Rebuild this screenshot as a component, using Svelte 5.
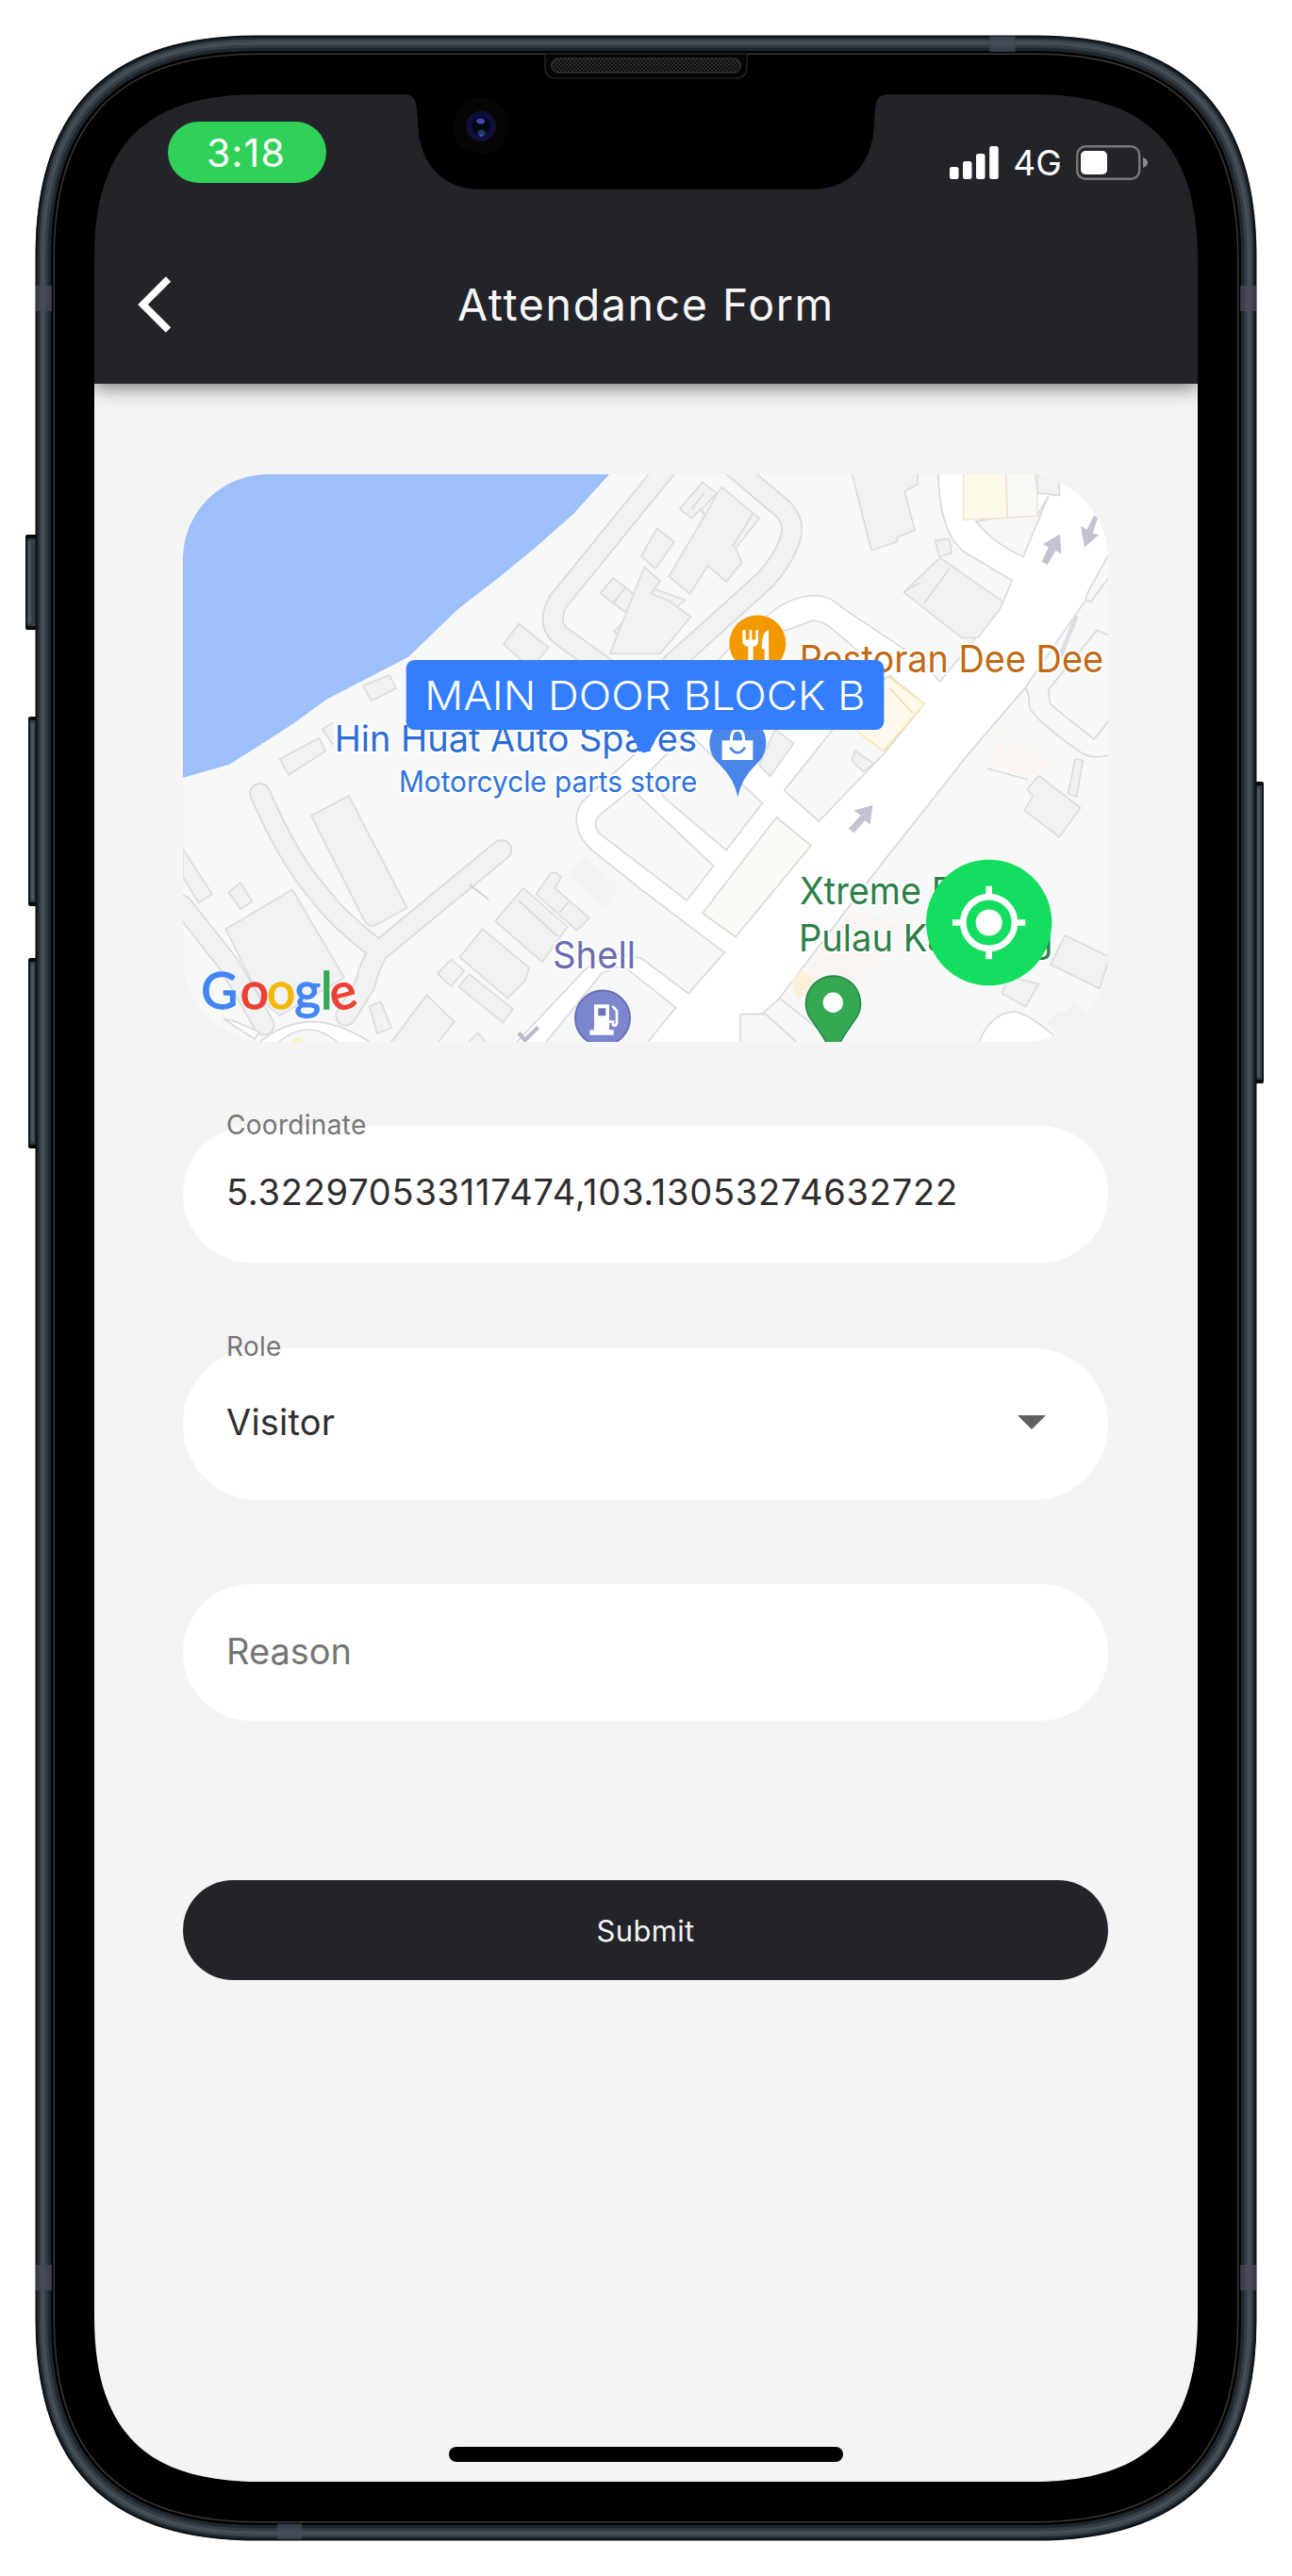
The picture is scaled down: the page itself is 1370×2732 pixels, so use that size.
<script>
  // Continuous-corner rectangle, inset from the outer edge of the phone body.
  function body(inset) {
    const x0 = 38 + inset, y0 = 38 + inset, x1 = 1332 - inset, y1 = 2694 - inset;
    const l = 234 - 0.95 * inset, c = 77 - 0.37 * inset;
    return `M${x0} ${y0 + l}C${x0} ${y0 + c} ${x0 + c} ${y0} ${x0 + l} ${y0}` +
      `L${x1 - l} ${y0}C${x1 - c} ${y0} ${x1} ${y0 + c} ${x1} ${y0 + l}` +
      `L${x1} ${y1 - l}C${x1} ${y1 - c} ${x1 - c} ${y1} ${x1 - l} ${y1}` +
      `L${x0 + l} ${y1}C${x0 + c} ${y1} ${x0} ${y1 - c} ${x0} ${y1 - l}Z`;
  }

  const screenHole = body(62);
  const rings = [
    { inset: 0.5, color: '#0a0f13', width: 2 },
    { inset: 2.5, color: '#1f272d', width: 2.5 },
    { inset: 5, color: '#3a444b', width: 3 },
    { inset: 8, color: '#474f56', width: 4 },
    { inset: 11.5, color: '#343d44', width: 4 },
    { inset: 14.5, color: '#20272c', width: 4 },
    { inset: 17, color: '#020303', width: 2 },
    { inset: 19.3, color: '#3d3b3b', width: 1.4 }
  ];

  const bands = [
    { x: 38, y: 303, w: 17, h: 27 },
    { x: 1315, y: 303, w: 17, h: 27 },
    { x: 38, y: 2402, w: 17, h: 27 },
    { x: 1315, y: 2402, w: 17, h: 27 },
    { x: 1049.5, y: 38.5, w: 27, h: 16.5 },
    { x: 294, y: 2676.5, w: 26, h: 16.5 }
  ];

  const keys = [
    { x: 27, y: 567, w: 13, h: 101 },
    { x: 30, y: 760, w: 10, h: 201 },
    { x: 30, y: 1016, w: 10, h: 202 },
    { x: 1330, y: 829, w: 10, h: 320 }
  ];

  const logo = [
    { ch: 'G', x: 100, turn: 0, fill: '#4285f4' },
    { ch: 'o', x: 224, turn: 0, fill: '#ea4335' },
    { ch: 'o', x: 309, turn: 0, fill: '#f2b90a' },
    { ch: 'g', x: 397, turn: 0, fill: '#4285f4' },
    { ch: 'l', x: 480, turn: 0, fill: '#34a853' },
    { ch: 'e', x: 510, turn: -14, fill: '#ea4335' }
  ];

  let coordinate = '5.322970533117474,103.13053274632722';
  let role = 'Visitor';
</script>

<main class="stage">
  <div class="screen">
    <header class="top">
      <div class="status">
        <span class="clock">3:18</span>
        <div class="signal">
          <svg class="bars" viewBox="0 0 52 35">
            <rect x="0" y="22" width="9.5" height="13" rx="2.5" />
            <rect x="14" y="16" width="9.5" height="19" rx="2.5" />
            <rect x="28" y="8" width="9.5" height="27" rx="2.5" />
            <rect x="42.2" y="0" width="9.5" height="35" rx="2.5" />
          </svg>
          <span class="net">4G</span>
          <svg class="battery" viewBox="0 0 76 37">
            <rect x="1.2" y="1.2" width="66" height="34.6" rx="9" fill="none" stroke="#77787c" stroke-width="2.4" />
            <rect x="5" y="6" width="28" height="25" rx="5" fill="#fff" />
            <path d="M71 13Q76 15 76 18.500T71 24Z" fill="#8a8b8e" />
          </svg>
        </div>
      </div>
      <div class="bar">
        <svg class="back" viewBox="0 0 36 60">
          <path d="M32.500 3L5.500 30L32.500 57" fill="none" stroke="#fff" stroke-width="7.5" />
        </svg>
        <h1>Attendance Form</h1>
        <span class="spacer"></span>
      </div>
    </header>

    <section class="form">
      <div class="map">
        <svg viewBox="42 40 2946 1804" preserveAspectRatio="none">
          <rect x="0" y="0" width="3000" height="1900" fill="#f7f8f8" />
          <!-- sea -->
          <path d="M0 0H1440L1398 40L1285 165L1160 275L1060 358L915 470L760 620L645 680L500 755L385 838L190 962L42 1004H0Z" fill="#9dc0fa" />

          <!-- wide white streets -->
          <path class="street" d="M2445 30C2445 170 2480 270 2550 300L2680 378L2640 470L2560 565L2450 700L2400 640L2320 585L2140 465Q2100 425 2050 425Q1970 428 1900 490L1800 570L1600 800L1480 930L1335 1060Q1285 1100 1295 1150Q1300 1200 1350 1240L1500 1360L1765 1560L1650 1690L1500 1578L1400 1560L1320 1615L1090 1860H1185L1375 1625L1440 1600L1610 1735L1500 1870H1800L1890 1750L1940 1705L2240 1310L2540 930L2720 720L3010 300V30Z" />
          <path d="M1110 1815L1130 1838L1172 1797" fill="none" stroke="#bcbac9" stroke-width="13" />
          <g class="plot">
            <path d="M1470 1040L1730 1285L1645 1395L1365 1180Q1345 1150 1365 1125Z" />
            <path d="M1520 990L1650 860L1720 930L1885 1085L1770 1235L1570 1065Z" />
            <path d="M1955 1045L2110 850L2200 740L2290 680L2400 770L2270 930L2065 1143Z" />
            <path d="M1950 540L2045 505Q2070 505 2100 525L2270 670L2180 760L1850 800Z" />
            <path d="M1815 1756L1895 1755L2000 1850H1815Z" />
            <path d="M2795 725L2950 535L2990 553V820L2940 882L2800 770Z" />
            <path d="M2565 190L2620 180L2760 170L2795 110L2715 302Q2620 260 2565 190Z" />
            <path d="M2990 290L2915 425Q2912 445 2930 445L2990 365Z" />
          </g>
          <path class="land" d="M2720 720Q2733 724 2735 780Q2750 820 2900 925Q2940 950 3000 928V1860H2135L1940 1705L2240 1310L2540 930Z" />
          <path d="M1930 1130L2040 1220L1800 1510L1695 1435Z" fill="#fcfaf6" stroke="#dadada" stroke-width="5" />
          <path d="M2290 685L2400 770L2270 920L2190 860" fill="#fef9ea" stroke="#f8e6b0" stroke-width="5" />
          <path d="M2290 720L2365 800" fill="none" stroke="#f3dfae" stroke-width="5" />
          <path d="M2525 30V185L2665 178L2660 30Z" fill="#fdfaea" stroke="#eee2b8" stroke-width="4" />
          <path d="M2660 30L2665 178L2760 172V30Z" fill="#fbf9f4" stroke="#ecdfd6" stroke-width="4" />
          <path d="M2820 650L2885 490" fill="none" stroke="#dedee2" stroke-width="14" />

          <!-- narrow grey lanes: casing first, then surface -->
          <g class="casing">
            <path d="M1580 20L1235 445Q1200 510 1240 550L1400 665" />
            <path d="M1795 20L1950 150Q1990 190 1975 240Q1960 300 1895 375L1600 640" />
            <path d="M287 1055C330 1150 390 1280 480 1380Q530 1450 665 1555" />
            <path d="M1055 1234L665 1555Q640 1590 620 1665L560 1760" />
            <path d="M40 1410L190 1600L300 1790" />
          </g>
          <g class="surface">
            <path d="M1580 20L1235 445Q1200 510 1240 550L1400 665" />
            <path d="M1795 20L1950 150Q1990 190 1975 240Q1960 300 1895 375L1600 640" />
            <path d="M287 1055C330 1150 390 1280 480 1380Q530 1450 665 1555" />
            <path d="M1055 1234L665 1555Q640 1590 620 1665L560 1760" />
            <path d="M40 1410L190 1600L300 1790" />
          </g>
          <path d="M955 1345L1015 1392" stroke="#cfcfcf" stroke-width="5" />
          <path class="street" d="M270 1860Q340 1790 440 1780Q540 1775 660 1860H550Q440 1750 330 1860Z" />
          <path class="street" d="M170 1770L210 1780L285 1812L270 1835Z" />

          <g class="house">
            <path d="M1110 515L1205 590L1170 632H1120L1062 580Z" />
            <path d="M1410 370L1450 400L1410 450L1370 418Z" />
            <path d="M1450 400L1485 430L1448 478L1412 450Z" />
            <path d="M1500 450L1412 540L1470 585L1640 440L1530 400Z" />
            <path d="M615 712L698 678L720 720L642 760Z" />
            <path d="M350 945L475 878L495 920L378 995Z" />
            <path d="M520 830L485 850L520 900" />
            <path d="M1695 65L1740 100L1690 155L1715 190L1690 150L1660 180L1622 150Z" />
            <path d="M1755 80L1875 180L1800 275L1820 320L1770 382L1712 330L1655 420L1588 365Z" />
            <path d="M1550 212L1605 255L1545 340L1500 300Z" />
            <path d="M1510 335L1560 380L1530 420L1595 445L1605 455L1658 492L1560 610H1400Z" />
            <path d="M2168 30L2232 282L2312 255L2315 240L2370 218L2338 95L2380 70L2378 30Z" />
            <path d="M2435 250L2480 245L2488 290L2448 302Z" />
            <path d="M2450 305L2650 445L2640 470L2570 560H2520L2335 415Z" />
            <path d="M2755 45H2830V108L2762 100Z" />
            <path d="M450 1125L570 1062L755 1418L650 1475Q630 1478 620 1460Z" />
            <path d="M178 1485L390 1360L555 1640L350 1760Q290 1720 260 1650Z" />
            <path d="M187 1368L225 1338L262 1398L225 1422Z" />
            <path d="M42 1230L135 1375L92 1402L42 1320Z" />
            <path d="M1125 1355L1265 1478L1185 1590L1035 1460Z" />
            <path d="M1165 1375L1210 1310Q1225 1298 1245 1320L1225 1355L1335 1450L1295 1490Z" />
            <path d="M995 1485L1143 1608L1130 1650L1075 1705L922 1575Z" />
            <path d="M895 1582L937 1618L895 1668L852 1627Z" />
            <path d="M952 1628L1092 1740L1060 1782L920 1670Z" />
            <path d="M818 1695L905 1780L850 1850H700Z" />
            <path d="M635 1730L672 1717L705 1800L660 1818Z" />
            <path d="M980 1815L1010 1850H945Z" />
            <path d="M2765 998L2897 1100L2830 1193L2718 1108L2745 1065L2728 1040Z" />
            <path d="M2880 945L2905 950L2885 1065L2858 1055Z" />
            <path d="M2848 1505L2990 1575L2958 1675L2802 1598Z" />
            <path d="M2668 1635L2765 1660L2722 1732L2648 1690Z" />
            <path d="M2180 918L2240 960L2205 985L2170 950Z" />
            <path d="M1925 850L1985 895L1910 1000L1875 965Z" />
          </g>
          <path d="M2480 340L2400 450M2385 385L2335 415M1110 1395L1235 1510M1270 1398L1240 1432M1700 100L1660 150M1855 165L1790 270M2600 975L2730 1010" fill="none" stroke="#d9d9dc" stroke-width="5" />
          <path d="M2600 950L2660 850L2790 960L2725 1008Z" fill="#fbf6f1" />
          <path d="M1265 1310L1320 1255L1430 1350L1380 1425Z" fill="#f3f5f4" />
          <path class="street" d="M2570 1860Q2600 1760 2680 1748Q2720 1745 2820 1830L2800 1860Z" />
          <path d="M2785 1785L2830 1745L2845 1755L2875 1718L2920 1755L2840 1830Z" fill="#f1f2f3" />
          <path d="M2160 1430L2240 1440L2310 1480L2240 1600L2080 1740L1980 1680Z" fill="#fdf0ec" opacity=".5" />
          <path d="M1975 1650L2010 1615L2050 1650L2000 1710Z" fill="#fdf0d8" />
          <path d="M380 1845Q410 1815 430 1845Z" fill="#fbf2c4" />

          <!-- one-way arrows -->
          <g fill="#c3c2d0">
            <path d="M2774 318L2795 272L2778 262L2832 230L2836 294L2818 282L2792 328Z" />
            <path d="M2940 170L2952 178L2936 228L2956 232L2910 272L2898 205L2918 216Z" />
            <path d="M2160 1166L2198 1124L2176 1108L2236 1092L2228 1154L2212 1140L2176 1180Z" />
          </g>

          <g class="poi">
            <text x="2003" y="668" font-size="117" textLength="967" lengthAdjust="spacingAndGlyphs" fill="#c06a17">Restoran Dee Dee</text>
            <text x="524" y="922" font-size="115" textLength="1153" lengthAdjust="spacingAndGlyphs" fill="#2c6ed5">Hin Huat Auto Spares</text>
            <text x="729" y="1050" font-size="93" textLength="949" lengthAdjust="spacingAndGlyphs" fill="#2f74dd">Motorcycle parts store</text>
            <text x="1218" y="1611" font-size="120" textLength="264" lengthAdjust="spacingAndGlyphs" fill="#6a6cb0">Shell</text>
            <text x="2004" y="1407" font-size="119" textLength="486" lengthAdjust="spacingAndGlyphs" fill="#2d8048">Xtreme F</text>
            <text x="2001" y="1557" font-size="119" textLength="808" lengthAdjust="spacingAndGlyphs" fill="#2d8048">Pulau Kambing</text>
          </g>

          <g class="logo">
            {#each logo as l}
              <text x={l.x} y="1740" fill={l.fill} stroke={l.fill} transform={`rotate(${l.turn} ${l.x + 41} 1700)`}>{l.ch}</text>
            {/each}
          </g>

          <!-- restaurant pin -->
          <circle cx="1870" cy="578" r="90" fill="#f29900" />
          <path d="M1822 535V570Q1822 586 1840 588V640H1856V588Q1872 586 1872 570V535H1864V566H1852V535H1844V566H1832V535ZM1905 535Q1883 540 1883 595H1892V640H1906Z" fill="#fff" />

          <!-- shop pin -->
          <path d="M1807 1066Q1797 1010 1752 965A90 90 0 1 1 1862 965Q1817 1010 1807 1066Z" fill="#4a86ea" />
          <path d="M1757 886H1855V948H1757Z" fill="#fff" />
          <path d="M1786 888Q1786 852 1806 852T1826 888" fill="none" stroke="#fff" stroke-width="9" />
          <path d="M1783 908Q1806 942 1830 908" fill="none" stroke="#4a86ea" stroke-width="8" />

          <!-- fuel pin -->
          <circle cx="1377" cy="1768" r="87" fill="#7c86cf" stroke="#6870b4" stroke-width="6" />
          <path d="M1350 1725H1398V1806H1412V1822H1336V1806H1350Z" fill="#fff" />
          <rect x="1363" y="1737" width="24" height="24" fill="#6b74ba" />
          <path d="M1398 1780H1410V1790Q1418 1796 1422 1784V1745L1408 1730" fill="none" stroke="#fff" stroke-width="8" />

          <!-- park pin -->
          <path d="M2093 1855Q2085 1835 2035 1765A87 87 0 1 1 2186 1765Q2136 1835 2128 1855Z" fill="#34a853" stroke="#288a48" stroke-width="5" />
          <circle cx="2110" cy="1719" r="32" fill="#fff" />

          <!-- place label -->
          <path d="M1440 845H1582Q1552 860 1540 895Q1525 925 1510 925Q1495 925 1482 895Q1470 860 1440 845Z" fill="#337dff" />
          <rect x="752" y="630" width="1520" height="222" rx="26" fill="#337dff" />
          <text class="place" x="811" y="790" textLength="1402" lengthAdjust="spacingAndGlyphs">MAIN DOOR BLOCK B</text>

          <!-- recenter button -->
          <circle cx="2606" cy="1465" r="200" fill="#13de5f" />
          <circle cx="2606" cy="1465" r="82" fill="none" stroke="#fff" stroke-width="20" />
          <circle cx="2606" cy="1465" r="42" fill="#fff" />
          <path d="M2606 1349V1385M2606 1545V1581M2490 1465H2526M2686 1465H2722" stroke="#fff" stroke-width="20" />
        </svg>
      </div>

      <div class="field first">
        <span class="label">Coordinate</span>
        <div class="box"><span class="value coord">{coordinate}</span></div>
      </div>
      <div class="field second">
        <span class="label">Role</span>
        <div class="box tall">
          <span class="value">{role}</span>
          <svg class="caret" viewBox="0 0 30 15"><path d="M0 0H30L15 15Z" fill="#616161" /></svg>
        </div>
      </div>
      <div class="field third">
        <div class="box"><span class="hint">Reason</span></div>
      </div>
      <button class="submit">Submit</button>
    </section>
    <div class="home"></div>
  </div>

  <svg class="device" viewBox="0 0 1370 2732">
    {#each keys as k}
      <rect x={k.x} y={k.y} width={k.w} height={k.h} rx="2" fill="#07090b" />
      <rect x={k.x + 1.5} y={k.y + 4} width={k.w - 3} height={k.h - 8} rx="1" fill="#343c44" />
      <rect x={k.x + 3} y={k.y + 7} width="3" height={k.h - 14} fill="#4b555e" />
    {/each}
    <path d={body(0) + screenHole} fill="#000" fill-rule="evenodd" />
    {#each rings as r}
      <path d={body(r.inset)} fill="none" stroke={r.color} stroke-width={r.width} />
    {/each}
    {#each bands as b}
      <rect x={b.x} y={b.y} width={b.w} height={b.h} fill="#484c5d" opacity=".7" />
    {/each}

    <!-- notch -->
    <path d="M424 98V100H428C438 100 442 106 442 117C444 135 443 145 446 152C452 178 472 200.700 509 200.700H861C898 200.700 918 178 924 152C927 145 926 135 928 117C928 106 932 100 942 100H946V98Z" />
    <path d="M576 57.500Q578 58 578 62V71Q578 83 590 83H780Q792 83 792 71V62Q792 58 794 57.500" fill="#050505" stroke="#2c2c2c" stroke-width="1.200" />
    <defs>
      <pattern id="mesh" width="4" height="4" patternUnits="userSpaceOnUse">
        <rect width="4" height="4" fill="#0c0c0c" />
        <rect x="0" y="0" width="2" height="1.500" fill="#3a3a3a" />
        <rect x="2" y="2" width="2" height="1.500" fill="#3a3a3a" />
      </pattern>
      <radialGradient id="lens">
        <stop offset="0" stop-color="#05051a" />
        <stop offset=".6" stop-color="#0a0b3c" />
        <stop offset=".8" stop-color="#0d1040" />
        <stop offset="1" stop-color="#101028" />
      </radialGradient>
    </defs>
    <rect x="584.500" y="62" width="201" height="15" rx="7.500" fill="url(#mesh)" stroke="#3f3f3f" stroke-width="1" />
    <circle cx="510" cy="133.700" r="30" fill="#070406" />
    <circle cx="510" cy="133.700" r="16" fill="url(#lens)" />
    <circle cx="510" cy="133.700" r="9" fill="#03030c" />
    <ellipse cx="509.500" cy="128.500" rx="4.500" ry="3" fill="#4048b0" />
    <ellipse cx="510.500" cy="141" rx="4" ry="3.500" fill="#123f58" />
    <circle cx="510.500" cy="143.500" r="1.500" fill="#7a35b8" />
  </svg>
</main>

<style>
  :global(body) {
    background: #fff;
  }
  .stage {
    position: relative;
    box-sizing: border-box;
    width: 1370px;
    height: 2732px;
    padding: 100px;
    overflow: hidden;
    font-family: Inter, 'Liberation Sans', sans-serif;
  }
  .device {
    position: absolute;
    inset: 0;
    width: 1370px;
    height: 2732px;
    pointer-events: none;
  }
  .screen {
    display: flex;
    flex-direction: column;
    width: 1170px;
    height: 2532px;
    background: #f4f4f4;
  }
  .top {
    display: flex;
    flex-direction: column;
    height: 307px;
    background: #232429;
    box-shadow: 0 5px 18px rgba(0, 0, 0, 0.48);
    color: #fff;
  }
  .status {
    display: flex;
    justify-content: space-between;
    align-items: flex-start;
    height: 139px;
    box-sizing: border-box;
    padding: 29px 53px 0 78px;
  }
  .clock {
    box-sizing: border-box;
    width: 168px;
    height: 65px;
    padding-right: 2px;
    border-radius: 33px;
    background: #2fd158;
    text-align: center;
    font-size: 41px;
    line-height: 66px;
    letter-spacing: 1.2px;
  }
  .signal {
    display: flex;
    align-items: center;
    padding-top: 25px;
  }
  .bars {
    width: 52px;
    height: 35px;
    fill: #fff;
  }
  .net {
    width: 82px;
    text-align: center;
    font-size: 37px;
    line-height: 37px;
  }
  .battery {
    width: 76px;
    height: 37px;
  }
  .bar {
    display: flex;
    align-items: center;
    justify-content: space-between;
    padding: 54px 46px 0 46px;
  }
  .back,
  .spacer {
    width: 36px;
    height: 60px;
  }
  h1 {
    margin: 0;
    font-size: 46.5px;
    font-weight: 400;
    line-height: 60px;
    letter-spacing: 1.6px;
    color: #f6f6f6;
  }
  .form {
    display: flex;
    flex-direction: column;
    padding: 96px 95px 0 94px;
  }
  .map {
    height: 602px;
    border-radius: 90px;
    overflow: hidden;
  }
  .map svg {
    display: block;
    width: 982px;
    height: 602px;
  }
  .street {
    fill: #fff;
    stroke: #dadada;
    stroke-width: 5;
  }
  .plot path,
  .land {
    fill: #f7f8f8;
    stroke: #dadada;
    stroke-width: 5;
  }
  .house path {
    fill: #f1f2f4;
    stroke: #dcdcde;
    stroke-width: 5;
    stroke-linejoin: round;
  }
  .casing path,
  .surface path {
    fill: none;
    stroke-linecap: round;
  }
  .casing path {
    stroke: #dadadc;
    stroke-width: 68;
  }
  .surface path {
    stroke: #f1f2f4;
    stroke-width: 58;
  }
  .poi text {
    paint-order: stroke;
    stroke: #fff;
    stroke-width: 12;
  }
  .logo text {
    font-family: Lato, sans-serif;
    font-size: 160px;
    font-weight: 400;
    stroke-width: 4;
  }
  .place {
    font-size: 128px;
    font-weight: 300;
    fill: #fff;
  }
  .field {
    display: flex;
    flex-direction: column;
  }
  .first {
    margin-top: 74px;
  }
  .second {
    margin-top: 75px;
  }
  .third {
    margin-top: 89px;
  }
  .label {
    position: relative;
    height: 28px;
    margin: 0 0 -13px 46px;
    font-size: 28px;
    line-height: 28px;
    letter-spacing: 0.3px;
    color: #757575;
  }
  .second .label {
    margin-bottom: -12px;
  }
  .box {
    display: flex;
    align-items: center;
    justify-content: space-between;
    box-sizing: border-box;
    height: 145px;
    padding: 0 66px 0 46px;
    border-radius: 72px;
    background: #fff;
    font-size: 38px;
    color: #2e2e2e;
  }
  .coord {
    padding-bottom: 6px;
    letter-spacing: 0.75px;
  }
  .tall {
    height: 161px;
    border-radius: 80px;
  }
  .tall .value {
    padding-bottom: 5px;
    letter-spacing: 0.2px;
  }
  .hint {
    color: #757575;
    padding-bottom: 4px;
  }
  .caret {
    width: 30px;
    height: 15px;
    margin-bottom: 5px;
  }
  .submit {
    height: 106px;
    margin-top: 169px;
    padding: 0;
    border: 0;
    border-radius: 53px;
    background: #232429;
    color: #f2f2f2;
    font-family: inherit;
    font-size: 31px;
    letter-spacing: 0.3px;
  }
  .home {
    width: 418px;
    height: 16px;
    margin: auto auto 21px 376px;
    border-radius: 8px;
    background: #000;
  }
</style>
